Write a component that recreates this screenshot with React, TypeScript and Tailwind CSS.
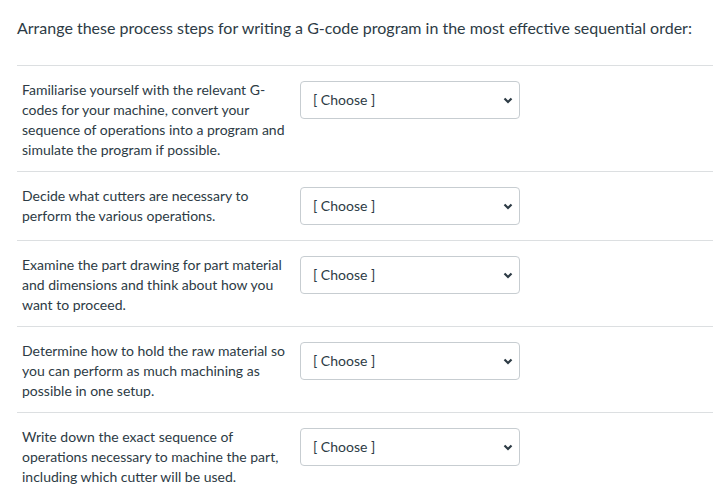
const steps = [
  "Familiarise yourself with the relevant G-codes for your machine, convert your sequence of operations into a program and simulate the program if possible.",
  "Decide what cutters are necessary to perform the various operations.",
  "Examine the part drawing for part material and dimensions and think about how you want to proceed.",
  "Determine how to hold the raw material so you can perform as much machining as possible in one setup.",
  "Write down the exact sequence of operations necessary to machine the part, including which cutter will be used.",
];

function ChooseBox() {
  return (
    <div className="mt-px mb-[4px] flex h-[38px] w-[220px] shrink-0 items-center justify-between rounded-[4px] border border-[#c7cdd1] bg-white pl-[12px] pr-[6px] text-[14px] text-[#2d3b45]">
      <span className="-mt-px">[ Choose ]</span>
      <svg width="10" height="7" viewBox="0 0 10 7" fill="none">
        <path d="M1.5 1.5L5 5L8.5 1.5" stroke="#2d3b45" strokeWidth="2.2" />
      </svg>
    </div>
  );
}

export default function App() {
  return (
    <main className="min-h-screen bg-white pt-4 font-['Lato','Liberation_Sans',sans-serif] text-[#2d3b45]">
      <h1 className="pl-[17px] text-[16px] leading-6">
        Arrange these process steps for writing a G-code program in the most effective sequential order:
      </h1>
      <div className="ml-[17px] mt-[25px]">
        {steps.map((s) => (
          <div key={s} className="flex border-t border-[#dcdfe1] pb-[11px] pl-[5px] pt-[14px]">
            <p className="w-[268px] text-[14px] leading-5">{s}</p>
            <div className="ml-[10px]">
              <ChooseBox />
            </div>
          </div>
        ))}
      </div>
    </main>
  );
}
